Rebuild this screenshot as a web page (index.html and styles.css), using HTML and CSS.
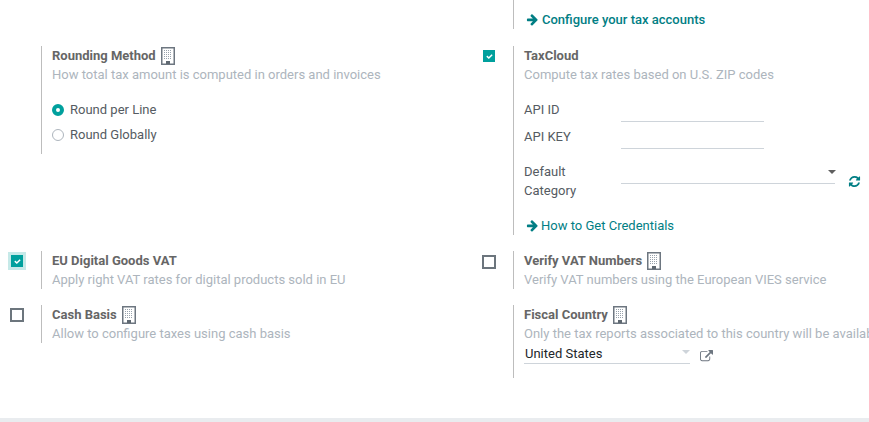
FILE: index.html
```html
<!DOCTYPE html>
<html lang="en">
<head>
    <meta charset="UTF-8">
    <title>Settings - Taxes</title>
    <link rel="stylesheet" href="styles.css">
</head>
<body>
    <svg class="defs" width="0" height="0">
        <symbol id="building" viewBox="0 0 14 18">
            <path d="M.75.75h12.5v16.5H.75z" fill="none" stroke="#6d7680" stroke-width="1.5"/>
            <path d="M3 3.5h8M3 5.5h8M3 7.5h8M3 9.5h8M3 11.5h8" stroke="#98a2ac" stroke-width="1" stroke-dasharray="1 1"/>
            <path d="M5 14h4v3H5z" fill="#5f6871"/>
        </symbol>
        <symbol id="arrow" viewBox="0 0 1792 1792">
            <path d="M1600 960q0 54-37 91l-651 651q-39 37-91 37-51 0-90-37l-75-75q-38-38-38-91t38-91l293-293h-704q-52 0-84.5-37.5t-32.5-90.5v-128q0-53 32.5-90.5t84.5-37.5h704l-293-294q-38-36-38-90t38-90l75-75q38-38 90-38 53 0 91 38l651 651q37 35 37 90z"/>
        </symbol>
        <symbol id="check" viewBox="0 0 1792 1792">
            <path d="M1671 566q0 40-28 68l-724 724-136 136q-28 28-68 28t-68-28l-136-136-362-362q-28-28-28-68t28-68l136-136q28-28 68-28t68 28l294 295 656-657q28-28 68-28t68 28l136 136q28 28 28 68z"/>
        </symbol>
    </svg>

    <main class="settings">
        <section class="box box-links">
            <div class="left-pane"></div>
            <div class="right-pane">
                <a class="link link-bold link-top"><svg class="arrow-icon"><use href="#arrow"/></svg>Configure your tax accounts</a>
            </div>
        </section>

        <section class="box">
            <div class="left-pane"></div>
            <div class="right-pane pane-radios">
                <div class="title">Rounding Method<svg class="building-icon"><use href="#building"/></svg></div>
                <div class="muted">How total tax amount is computed in orders and invoices</div>
                <div class="radios">
                    <div class="radio-row"><span class="radio radio-on"></span>Round per Line</div>
                    <div class="radio-row"><span class="radio"></span>Round Globally</div>
                </div>
            </div>
        </section>
        <section class="box">
            <div class="left-pane"><span class="check check-on"><svg class="check-icon"><use href="#check"/></svg></span></div>
            <div class="right-pane">
                <div class="title">TaxCloud</div>
                <div class="muted">Compute tax rates based on U.S. ZIP codes</div>
                <div class="fields">
                    <label class="field-label">API ID</label>
                    <span class="input input-short"></span>
                    <label class="field-label">API KEY</label>
                    <span class="input input-short"></span>
                    <label class="field-label field-label-wrap">Default Category</label>
                    <div class="select-row">
                        <span class="input input-select"><span class="caret"></span></span>
                        <svg class="refresh-icon" viewBox="0 0 1792 1792"><path d="M1639 1056q0 5-1 7-64 268-268 434.5t-478 166.5q-146 0-282.5-55t-243.5-157l-129 129q-19 19-45 19t-45-19-19-45v-448q0-26 19-45t45-19h448q26 0 45 19t19 45-19 45l-137 137q71 66 161 102t187 36q134 0 250-65t186-179q11-17 53-117 8-23 30-23h192q13 0 22.5 9.5t9.5 22.5zm25-800v448q0 26-19 45t-45 19h-448q-26 0-45-19t-19-45 19-45l138-138q-148-137-349-137-134 0-250 65t-186 179q-11 17-53 117-8 23-30 23h-199q-13 0-22.5-9.5t-9.5-22.5v-7q65-268 270-434.5t480-166.5q146 0 284 55.5t245 156.5l130-129q19-19 45-19t45 19 19 45z"/></svg>
                    </div>
                </div>
                <a class="link link-credentials"><svg class="arrow-icon"><use href="#arrow"/></svg>How to Get Credentials</a>
            </div>
        </section>

        <section class="box">
            <div class="left-pane"><span class="focus-ring"><span class="check check-on"><svg class="check-icon"><use href="#check"/></svg></span></span></div>
            <div class="right-pane">
                <div class="title">EU Digital Goods VAT</div>
                <div class="muted">Apply right VAT rates for digital products sold in EU</div>
            </div>
        </section>
        <section class="box">
            <div class="left-pane"><span class="check"></span></div>
            <div class="right-pane">
                <div class="title">Verify VAT Numbers<svg class="building-icon"><use href="#building"/></svg></div>
                <div class="muted">Verify VAT numbers using the European VIES service</div>
            </div>
        </section>

        <section class="box">
            <div class="left-pane"><span class="check check-high"></span></div>
            <div class="right-pane">
                <div class="title">Cash Basis<svg class="building-icon"><use href="#building"/></svg></div>
                <div class="muted">Allow to configure taxes using cash basis</div>
            </div>
        </section>
        <section class="box">
            <div class="left-pane"></div>
            <div class="right-pane pane-country">
                <div class="title">Fiscal Country<svg class="building-icon"><use href="#building"/></svg></div>
                <div class="muted nowrap">Only the tax reports associated to this country will be available</div>
                <div class="country-row">
                    <span class="country-select">United States<span class="caret caret-light"></span></span>
                    <svg class="external-icon" viewBox="0 0 1792 1792"><path d="M1408 928v320q0 119-84.5 203.5t-203.5 84.5h-832q-119 0-203.5-84.5t-84.5-203.5v-832q0-119 84.5-203.5t203.5-84.5h704q14 0 23 9t9 23v64q0 14-9 23t-23 9h-704q-66 0-113 47t-47 113v832q0 66 47 113t113 47h832q66 0 113-47t47-113v-320q0-14 9-23t23-9h64q14 0 23 9t9 23zm384-864v512q0 26-19 45t-45 19-45-19l-176-176-652 652q-10 10-23 10t-23-10l-114-114q-10-10-10-23t10-23l652-652-176-176q-19-19-19-45t19-45 45-19h512q26 0 45 19t19 45z"/></svg>
                </div>
            </div>
        </section>
    </main>

    <div class="bottom-bar"></div>
</body>
</html>
```

FILE: styles.css
```css
html, body {
    margin: 0;
    padding: 0;
    height: 100%;
    overflow: hidden;
}

body {
    font-family: Roboto, "Liberation Sans", sans-serif;
    font-size: 13px;
    line-height: 19px;
    color: #555b62;
    background-color: #fff;
    display: flex;
    flex-direction: column;
}

.defs {
    position: absolute;
}

.settings {
    flex: 1;
    display: grid;
    grid-template-columns: 472px 397px;
    grid-template-rows: 30px 189px 38px auto;
    row-gap: 16px;
    align-items: start;
}

.box {
    display: flex;
    min-width: 0;
}

.box-links {
    grid-column: 2;
}

.left-pane {
    width: 41px;
    flex: none;
}

.right-pane {
    flex: 1;
    min-width: 0;
    border-left: 1px solid #bdbdbd;
    padding-left: 10px;
    overflow: hidden;
}

.pane-radios {
    height: 108px;
}

.pane-country {
    height: 73px;
}

.title {
    font-weight: 700;
    color: #666;
    display: flex;
    align-items: center;
    gap: 5px;
    height: 19px;
    white-space: pre;
}

.muted {
    color: #adb5bd;
}

.nowrap {
    white-space: nowrap;
}

.building-icon {
    width: 14px;
    height: 18px;
    flex: none;
}

/* checkboxes */
.check {
    display: block;
    box-sizing: border-box;
    width: 14px;
    height: 14px;
    margin: 4px 0 0 10px;
    border: 2px solid #6c757d;
}

.check-high {
    margin-top: 3px;
}

.check-on {
    width: 12px;
    height: 12px;
    margin: 4px 0 0 11px;
    border: 0;
    background-color: #00a09d;
    display: flex;
    align-items: center;
    justify-content: center;
}

.check-icon {
    width: 7px;
    height: 7px;
    fill: #fff;
}

.focus-ring {
    display: block;
    box-sizing: border-box;
    width: 18px;
    height: 18px;
    margin: 1px 0 0 8px;
    border: 3px solid #c6e9e8;
}

.focus-ring .check-on {
    margin: 0;
}

/* radios */
.radios {
    margin-top: 16px;
    display: flex;
    flex-direction: column;
    gap: 6px;
}

.radio-row {
    display: flex;
    align-items: center;
    gap: 6px;
}

.radio {
    box-sizing: border-box;
    width: 12px;
    height: 12px;
    border: 1px solid #adb5bd;
    border-radius: 50%;
    flex: none;
}

.radio-on {
    border: 4px solid #00a09d;
    background-color: #fff;
}

/* TaxCloud fields */
.fields {
    margin-top: 16px;
    display: grid;
    grid-template-columns: 97px 1fr;
    align-items: start;
    row-gap: 5px;
}

.field-label {
    display: block;
    width: 70px;
}

.field-label-wrap {
    margin-top: 8px;
}

.input {
    display: block;
    box-sizing: border-box;
    height: 22px;
    border-bottom: 1px solid #ced4da;
    position: relative;
}

.input-short {
    width: 143px;
}

.input-select {
    width: 214px;
    height: 23px;
}

.select-row {
    display: flex;
    align-items: flex-start;
    margin-top: 7px;
    gap: 13px;
}

.caret {
    position: absolute;
    right: -1px;
    top: 9px;
    border-left: 4px solid transparent;
    border-right: 4px solid transparent;
    border-top: 4px solid #5f5f5f;
}

.caret-light {
    right: 0;
    top: 7px;
    border-top-color: #ced4da;
}

.refresh-icon {
    width: 13px;
    height: 13px;
    margin-top: 14px;
    fill: #017e84;
}

/* links */
.link {
    display: flex;
    align-items: center;
    color: #017e84;
}

.link-bold {
    font-weight: 500;
}

.link-top {
    padding: 10px 0 0 2px;
    gap: 3px;
}

.link-credentials {
    margin-top: 16px;
    padding-left: 2px;
    gap: 2px;
}

.arrow-icon {
    width: 13px;
    height: 13px;
    fill: #017e84;
}

/* fiscal country */
.country-row {
    display: flex;
    align-items: flex-start;
    gap: 10px;
}

.country-select {
    box-sizing: border-box;
    display: block;
    position: relative;
    width: 166px;
    height: 21px;
    padding: 1px 0 0 1px;
    color: #212529;
    border-bottom: 1px solid #ced4da;
}

.external-icon {
    width: 13px;
    height: 13px;
    margin-top: 7px;
    fill: #6d7680;
}

.bottom-bar {
    height: 4px;
    flex: none;
    background-color: #e9ecef;
}
```
